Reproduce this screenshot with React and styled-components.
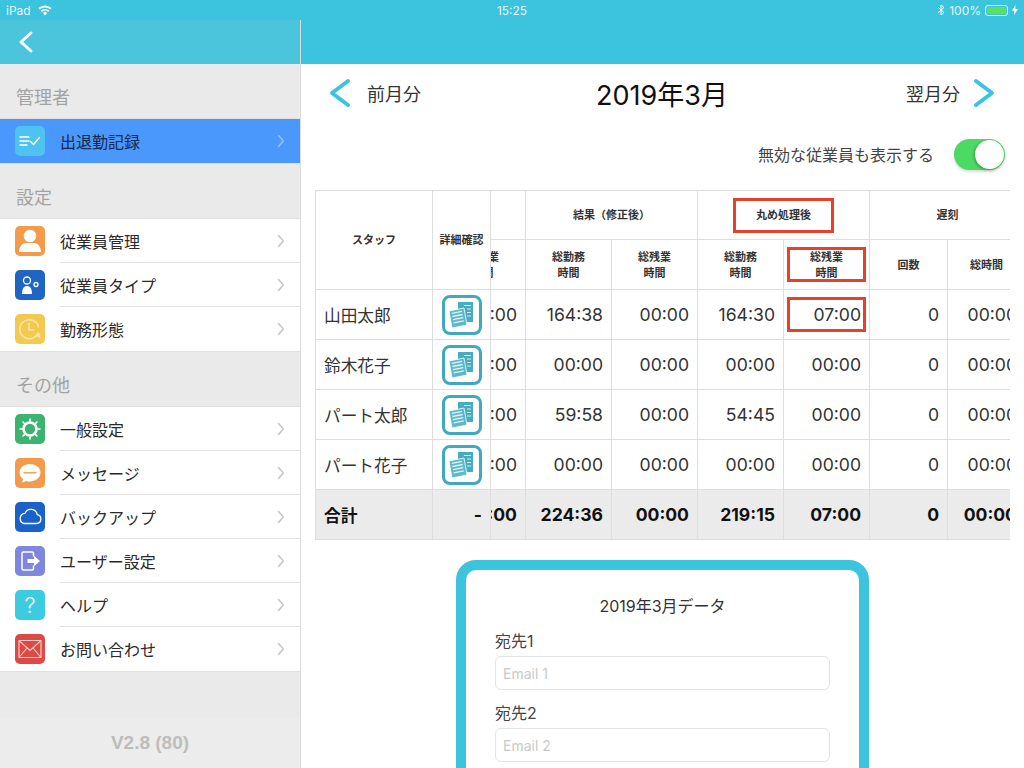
import React from 'react';
import styled, { createGlobalStyle } from 'styled-components';

const CYAN = '#3cc3de';
const RED = '#e8412a';
const LINE = '#dedede';
const FONT = `Inter, "Noto Sans CJK JP", "Noto Sans", sans-serif`;

const GlobalStyle = createGlobalStyle`
  html, body { margin: 0; padding: 0; height: 100%; overflow: hidden; background: #fff; }
  body { font-family: ${FONT}; color: #222; }
  * { box-sizing: border-box; }
`;

const Screen = styled.div`
  width: 1024px;
  height: 768px;
  overflow: hidden;
  display: flex;
  flex-direction: column;
`;

const StatusBar = styled.div`
  flex: none;
  height: 20px;
  background: ${CYAN};
  color: rgba(255, 255, 255, 0.9);
  font-size: 12px;
  display: grid;
  grid-template-columns: 1fr auto 1fr;
  align-items: center;
  padding: 0 6px;
`;

const StatusSide = styled.div`
  display: flex;
  align-items: center;
  gap: ${p => p.$gap || 7}px;
  justify-content: ${p => (p.$right ? 'flex-end' : 'flex-start')};
`;

const Battery = styled.div`
  width: 23px;
  height: 11px;
  border: 1px solid rgba(255, 255, 255, 0.8);
  border-radius: 3px;
  padding: 1px;
  & > div { height: 100%; background: #5ee05c; border-radius: 1px; }
`;

const Body = styled.div`
  flex: 1;
  min-height: 0;
  display: grid;
  grid-template-columns: 301px 1fr;
  grid-template-rows: minmax(0, 1fr);
`;

const Sidebar = styled.aside`
  background: #eaeaea;
  border-right: 1px solid #dcdcdc;
  display: flex;
  flex-direction: column;
  min-height: 0;
`;

const SideNav = styled.div`
  flex: none;
  height: 44px;
  background: #4ac5dc;
  display: flex;
  align-items: center;
  padding-left: 18px;
`;

const SectionLabel = styled.div`
  height: 54px;
  padding: 20px 0 0 16px;
  font-size: 18px;
  line-height: 28px;
  color: #a3a3a3;
`;

const Group = styled.div`
  border-top: 1px solid #e0e0e0;
  border-bottom: 1px solid #e0e0e0;
  background: #fff;
`;

const Row = styled.div`
  height: 44px;
  display: flex;
  align-items: center;
  padding: 0 15px;
  gap: 15px;
  background: ${p => (p.$active ? '#4a98fb' : '#fff')};
  color: ${p => (p.$active ? '#12294f' : '#2a2a2a')};
  font-size: 16px;
`;

const RowBody = styled.div`
  flex: 1;
  align-self: stretch;
  display: flex;
  align-items: center;
  justify-content: space-between;
  margin-right: -15px;
  padding-right: 15px;
  border-bottom: ${p => (p.$last || p.$active ? 'none' : '1px solid #e2e2e2')};
`;

const Tile = styled.div`
  flex: none;
  width: 30px;
  height: 30px;
  border-radius: 5px;
  background: ${p => p.$bg};
  color: #fff;
  display: flex;
  align-items: center;
  justify-content: center;
  font-size: 22px;
  font-weight: 300;
  line-height: 1;
`;

const Version = styled.div`
  margin-top: auto;
  height: 50px;
  background: #ececec;
  display: flex;
  align-items: center;
  justify-content: center;
  font-family: "Liberation Sans", sans-serif;
  font-size: 19px;
  font-weight: 700;
  color: #bdbdbd;
`;

const Main = styled.main`
  min-width: 0;
  min-height: 0;
  overflow: hidden;
  display: flex;
  flex-direction: column;
  background: #fff;
`;

const MainNav = styled.div`
  flex: none;
  height: 44px;
  background: ${CYAN};
`;

const MonthBar = styled.div`
  flex: none;
  height: 60px;
  padding: 0 28px 2px 27px;
  display: grid;
  grid-template-columns: 1fr auto 1fr;
  align-items: center;
`;

const MonthLink = styled.div`
  display: flex;
  align-items: center;
  gap: ${p => (p.$right ? 12 : 15)}px;
  font-size: 18px;
  color: #333;
  justify-content: ${p => (p.$right ? 'flex-end' : 'flex-start')};
`;

const MonthTitle = styled.div`
  font-size: 27px;
  color: #111;
`;

const ToggleRow = styled.div`
  flex: none;
  height: 60px;
  display: flex;
  align-items: center;
  justify-content: flex-end;
  gap: 20px;
  padding-right: 19px;
  font-size: 16px;
  color: #444;
`;

const Toggle = styled.div`
  width: 51px;
  height: 31px;
  border-radius: 16px;
  background: #4cd964;
  padding: 1px;
  display: flex;
  justify-content: flex-end;
  box-shadow: 0 2px 3px rgba(0, 0, 0, 0.15);
  & > div {
    width: 29px;
    height: 29px;
    border-radius: 50%;
    background: #fff;
    box-shadow: -1px 1px 3px rgba(0, 0, 0, 0.3);
  }
`;

const TableFrame = styled.div`
  flex: none;
  margin: 6px 14px 0 14px;
  display: flex;
  border-top: 1px solid ${LINE};
  border-left: 1px solid ${LINE};
  overflow: hidden;
`;

const FixedPane = styled.div`
  flex: none;
  border-right: 1px solid ${LINE};
`;

const ScrollPane = styled.div`
  flex: 1;
  min-width: 0;
  overflow: hidden;
`;

const Table = styled.table`
  border-collapse: separate;
  border-spacing: 0;
  table-layout: fixed;
  width: ${p => p.$width}px;
  margin-left: ${p => p.$offset || 0}px;
`;

const Col = styled.col`
  width: ${p => p.$w}px;
`;

const Head = styled.th`
  height: ${p => p.$h || 50}px;
  padding: 0;
  border-right: 1px solid ${LINE};
  border-bottom: 1px solid ${LINE};
  font-size: 11px;
  line-height: 16px;
  font-weight: 700;
  color: #333;
  text-align: center;
  vertical-align: middle;
`;

const DetailHead = styled(Head)`
  border-right: none;
`;

const Cell = styled.td`
  height: 50px;
  padding: ${p => (p.$flush ? 0 : '0 8px')};
  border-right: 1px solid ${LINE};
  border-bottom: 1px solid ${LINE};
  background: ${p => (p.$total ? '#ebebeb' : '#fff')};
  font-size: 17.6px;
  font-weight: ${p => (p.$total ? 700 : 400)};
  color: ${p => (p.$total ? '#111' : '#333')};
  text-align: right;
  white-space: nowrap;
  vertical-align: middle;
`;

const NameCell = styled(Cell)`
  text-align: left;
  font-size: 16.7px;
`;

const ActionCell = styled(Cell)`
  border-right: none;
  text-align: ${p => (p.$total ? 'right' : 'center')};
`;

const DocButton = styled.div`
  width: 40px;
  height: 40px;
  margin: 0 auto;
  border: 3px solid #3faabf;
  border-radius: 8px;
  background: #fff;
  display: flex;
  align-items: center;
  justify-content: center;
`;

const Marked = styled.div`
  width: ${p => p.$w}px;
  height: 35px;
  margin: 0 auto;
  border: 3px solid ${RED};
  display: flex;
  align-items: center;
  justify-content: ${p => (p.$end ? 'flex-end' : 'center')};
  padding-right: ${p => (p.$end ? 2 : 0)}px;
`;

const Card = styled.section`
  flex: none;
  width: 413px;
  margin: 20px auto 0;
  border: 10px solid ${CYAN};
  border-radius: 20px;
  padding: 24px 29px 40px;
`;

const CardTitle = styled.div`
  text-align: center;
  font-size: 16px;
  line-height: 24px;
  color: #333;
  margin-bottom: 11px;
`;

const FieldLabel = styled.div`
  font-size: 16px;
  line-height: 24px;
  color: #444;
  margin-bottom: 3px;
`;

const EmailInput = styled.div`
  height: 34px;
  margin-bottom: 11px;
  border: 1px solid #e4e4e4;
  border-radius: 6px;
  padding: 0 7px;
  display: flex;
  align-items: center;
  font-size: 14px;
  color: #c9c9c9;
`;

const Chevron = ({ dir = 'right', color = '#c7c7cc', w = 8, h = 14, sw = 1.6 }) => (
  <svg width={w} height={h} viewBox={`0 0 ${w} ${h}`} fill="none">
    <polyline
      points={dir === 'right'
        ? `${sw},${sw} ${w - sw},${h / 2} ${sw},${h - sw}`
        : `${w - sw},${sw} ${sw},${h / 2} ${w - sw},${h - sw}`}
      stroke={color}
      strokeWidth={sw}
      strokeLinecap="round"
      strokeLinejoin="round"
    />
  </svg>
);

const Glyph = ({ children }) => (
  <svg width="30" height="30" viewBox="0 0 30 30" fill="none" stroke="#fff" strokeWidth="1.5" strokeLinecap="round" strokeLinejoin="round">
    {children}
  </svg>
);

const icons = {
  record: (
    <Glyph>
      <path d="M5 11h9M5 15h9M5 19h7" strokeWidth="1.3" />
      <path d="M15.5 15.5l3 3 6-7" strokeWidth="1.3" />
    </Glyph>
  ),
  person: (
    <Glyph>
      <circle cx="15" cy="10" r="5.5" fill="#fff" />
      <path d="M4 26c0-6 4-9 7-9h8c3 0 7 3 7 9z" fill="#fff" stroke="none" />
    </Glyph>
  ),
  type: (
    <Glyph>
      <circle cx="12" cy="10.5" r="3.5" strokeWidth="1.3" />
      <path d="M7 24c0-5 1.5-8 5-8s5 3 5 8z" fill="#fff" stroke="none" />
      <circle cx="21" cy="14.5" r="2" strokeWidth="1.3" />
    </Glyph>
  ),
  clock: (
    <Glyph>
      <path d="M23 19a9.5 9.5 0 1 1 .5-6" stroke="#fbe6a6" />
      <path d="M14 9.5V16h5" stroke="#fbe6a6" />
      <path d="M20 22l5-3 .5 5z" fill="#fbe6a6" stroke="none" />
    </Glyph>
  ),
  gear: (
    <Glyph>
      <circle cx="15" cy="15" r="6.5" strokeWidth="2.6" />
      <path d="M15 5v2M15 23v2M5 15h2M23 15h2M8 8l1.400 1.400M20.600 20.600L22 22M8 22l1.400-1.400M20.600 9.400L22 8" strokeWidth="1.600" />
    </Glyph>
  ),
  message: (
    <Glyph>
      <path d="M15 6c6 0 10.500 3.800 10.500 8.600S21 23.500 15 23.500c-1.300 0-2.600-.2-3.700-.6L7 24.500l1-3.600C5.800 19.300 4.500 17.100 4.500 14.600 4.500 9.800 9 6 15 6z" fill="#fff" stroke="none" />
      <path d="M9 14.800h12" stroke="#f0a35c" strokeWidth="1.400" />
    </Glyph>
  ),
  cloud: (
    <Glyph>
      <path d="M9 21.500h12.500a4.500 4.500 0 0 0 .8-8.900 6.500 6.500 0 0 0-12.300-1.300A5.200 5.200 0 0 0 9 21.500z" strokeWidth="1.300" />
    </Glyph>
  ),
  logout: (
    <Glyph>
      <path d="M18.500 10V7.500a1.500 1.500 0 0 0-1.500-1.500H8.500A1.500 1.500 0 0 0 7 7.500v15A1.500 1.500 0 0 0 8.500 24H17a1.500 1.500 0 0 0 1.500-1.500V20" />
      <path d="M12.500 13h6.500V9.800l6 5.200-6 5.200V17h-6.500z" fill="#fff" stroke="none" />
    </Glyph>
  ),
  mail: (
    <Glyph>
      <rect x="4" y="6.500" width="22" height="17" strokeWidth="1.200" stroke="#f8c9c4" />
      <path d="M4.500 7l10.500 9.500L25.500 7M4.500 23l7.500-9M25.500 23l-7.500-9" strokeWidth="1.100" stroke="#f8c9c4" />
    </Glyph>
  ),
};

const DocIcon = () => (
  <svg width="30" height="30" viewBox="0 0 30 30">
    <path d="M11 2h15v20H11z" fill="#45acc2" />
    <path d="M17 5.500h7M20 9h4M20 12.500h4M20 16h4" stroke="#d8f0f4" strokeWidth="1.200" />
    <path d="M2 11l15-3 3 17-15 3z" fill="#5db8cb" stroke="#fff" strokeWidth="0.800" />
    <path d="M4.800 13.300l10.200-2M5.400 16.500l10.200-2M6 19.700l10.200-2M6.600 22.900l10.200-2" stroke="#e2f5f8" strokeWidth="1.300" />
  </svg>
);

const sections = [
  { label: '管理者', items: [{ text: '出退勤記録', bg: '#4fc3f0', icon: 'record', active: true }] },
  {
    label: '設定',
    items: [
      { text: '従業員管理', bg: '#f39a4b', icon: 'person' },
      { text: '従業員タイプ', bg: '#1f65c1', icon: 'type' },
      { text: '勤務形態', bg: '#f3c94f', icon: 'clock' },
    ],
  },
  {
    label: 'その他',
    items: [
      { text: '一般設定', bg: '#3cb371', icon: 'gear' },
      { text: 'メッセージ', bg: '#f39a4b', icon: 'message' },
      { text: 'バックアップ', bg: '#1a61c9', icon: 'cloud' },
      { text: 'ユーザー設定', bg: '#7f87dc', icon: 'logout' },
      { text: 'ヘルプ', bg: '#3ccbe0', help: true },
      { text: 'お問い合わせ', bg: '#dc4a45', icon: 'mail' },
    ],
  },
];

const staff = [
  { name: '山田太郎', values: ['00:00', '164:38', '00:00', '164:30', '07:00', '0', '00:00'] },
  { name: '鈴木花子', values: ['00:00', '00:00', '00:00', '00:00', '00:00', '0', '00:00'] },
  { name: 'パート太郎', values: ['00:00', '59:58', '00:00', '54:45', '00:00', '0', '00:00'] },
  { name: 'パート花子', values: ['00:00', '00:00', '00:00', '00:00', '00:00', '0', '00:00'] },
];
const totals = ['00:00', '224:36', '00:00', '219:15', '07:00', '0', '00:00'];
const scrollCols = [86, 86, 86, 86, 86, 78, 78];

const TwoLines = ({ a, b }) => <>{a}<br />{b}</>;

export default function App() {
  return (
    <Screen>
      <GlobalStyle />
      <StatusBar>
        <StatusSide>
          <span>iPad</span>
          <svg width="14" height="11" viewBox="0 0 14 11" fill="#fff">
            <path d="M7 10.500L4.900 8.100a3 3 0 0 1 4.200 0zM3.900 7L2.700 5.600a6.300 6.300 0 0 1 8.600 0L10.100 7a4.500 4.500 0 0 0-6.200 0zM1.700 4.500L.4 3a9.700 9.700 0 0 1 13.200 0l-1.300 1.500a7.800 7.800 0 0 0-10.600 0z" />
          </svg>
        </StatusSide>
        <span>15:25</span>
        <StatusSide $right $gap={4}>
          <svg width="8" height="12" viewBox="0 0 8 12" fill="none" stroke="#fff" strokeWidth="1">
            <path d="M1 3.200l6 5.300L4 11V1l3 2.500-6 5.300" />
          </svg>
          <span>100%</span>
          <Battery><div /></Battery>
          <svg width="6" height="10" viewBox="0 0 6 10" fill="#fff">
            <path d="M3.500 0L0 5.800h2.400L2 10l4-6H3.400z" />
          </svg>
        </StatusSide>
      </StatusBar>
      <Body>
        <Sidebar>
          <SideNav>
            <Chevron dir="left" color="#fff" w={16} h={24} sw={3} />
          </SideNav>
          {sections.map(section => (
            <React.Fragment key={section.label}>
              <SectionLabel>{section.label}</SectionLabel>
              <Group>
                {section.items.map((item, i) => (
                  <Row key={item.text} $active={item.active}>
                    <Tile $bg={item.bg}>{item.help ? '?' : icons[item.icon]}</Tile>
                    <RowBody $active={item.active} $last={i === section.items.length - 1}>
                      {item.text}
                      <Chevron color={item.active ? '#8fc0fb' : '#c7c7cc'} />
                    </RowBody>
                  </Row>
                ))}
              </Group>
            </React.Fragment>
          ))}
          <Version>V2.8 (80)</Version>
        </Sidebar>
        <Main>
          <MainNav />
          <MonthBar>
            <MonthLink>
              <Chevron dir="left" color={CYAN} w={24} h={32} sw={4} />
              前月分
            </MonthLink>
            <MonthTitle>2019年3月</MonthTitle>
            <MonthLink $right>
              翌月分
              <Chevron color={CYAN} w={24} h={32} sw={4} />
            </MonthLink>
          </MonthBar>
          <ToggleRow>
            無効な従業員も表示する
            <Toggle><div /></Toggle>
          </ToggleRow>
          <TableFrame>
            <FixedPane>
              <Table $width={174}>
                <colgroup>
                  <Col $w={117} />
                  <Col $w={57} />
                </colgroup>
                <thead>
                  <tr>
                    <Head $h={99}>スタッフ</Head>
                    <DetailHead $h={99}>詳細確認</DetailHead>
                  </tr>
                </thead>
                <tbody>
                  {staff.map(person => (
                    <tr key={person.name}>
                      <NameCell>{person.name}</NameCell>
                      <ActionCell $flush>
                        <DocButton><DocIcon /></DocButton>
                      </ActionCell>
                    </tr>
                  ))}
                  <tr>
                    <NameCell $total>合計</NameCell>
                    <ActionCell $total>-</ActionCell>
                  </tr>
                </tbody>
              </Table>
            </FixedPane>
            <ScrollPane>
              <Table $width={586} $offset={-51}>
                <colgroup>
                  {scrollCols.map((w, i) => <Col key={i} $w={w} />)}
                </colgroup>
                <thead>
                  <tr>
                    <Head $h={49} />
                    <Head $h={49} colSpan={2}>結果（修正後）</Head>
                    <Head $h={49} colSpan={2}><Marked $w={101}>丸め処理後</Marked></Head>
                    <Head $h={49} colSpan={2}>遅刻</Head>
                  </tr>
                  <tr>
                    <Head><TwoLines a="総残業" b="時間" /></Head>
                    <Head><TwoLines a="総勤務" b="時間" /></Head>
                    <Head><TwoLines a="総残業" b="時間" /></Head>
                    <Head><TwoLines a="総勤務" b="時間" /></Head>
                    <Head><Marked $w={79}><span><TwoLines a="総残業" b="時間" /></span></Marked></Head>
                    <Head>回数</Head>
                    <Head>総時間</Head>
                  </tr>
                </thead>
                <tbody>
                  {staff.map((person, r) => (
                    <tr key={person.name}>
                      {person.values.map((v, c) => (r === 0 && c === 4
                        ? <Cell key={c} $flush><Marked $w={79} $end>{v}</Marked></Cell>
                        : <Cell key={c}>{v}</Cell>))}
                    </tr>
                  ))}
                  <tr>
                    {totals.map((v, c) => <Cell key={c} $total>{v}</Cell>)}
                  </tr>
                </tbody>
              </Table>
            </ScrollPane>
          </TableFrame>
          <Card>
            <CardTitle>2019年3月データ</CardTitle>
            <FieldLabel>宛先1</FieldLabel>
            <EmailInput>Email 1</EmailInput>
            <FieldLabel>宛先2</FieldLabel>
            <EmailInput>Email 2</EmailInput>
          </Card>
        </Main>
      </Body>
    </Screen>
  );
}
